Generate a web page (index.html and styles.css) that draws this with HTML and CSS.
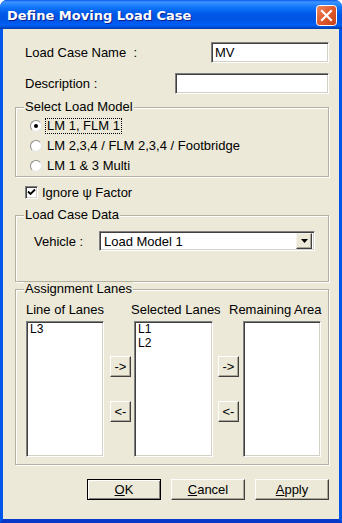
FILE: index.html
```html
<!DOCTYPE html>
<html lang="en">
<head>
    <meta charset="UTF-8">
    <meta name="viewport" content="width=device-width, initial-scale=1.0">
    <title>Define Moving Load Case</title>
    <link rel="stylesheet" href="styles.css">
</head>
<body>
    <div class="window">
        <div class="titlebar">
            <span class="title">Define Moving Load Case</span>
            <span class="close">
                <svg width="21" height="21" viewBox="0 0 21 21">
                    <defs>
                        <linearGradient id="cg" x1="0" y1="0" x2="1" y2="1">
                            <stop offset="0" stop-color="#F08A62"/>
                            <stop offset="0.5" stop-color="#E05A2C"/>
                            <stop offset="1" stop-color="#C6401A"/>
                        </linearGradient>
                    </defs>
                    <rect x="0.5" y="0.5" width="20" height="20" rx="3" fill="url(#cg)" stroke="#fff"/>
                    <path d="M6 6 L15 15 M15 6 L6 15" stroke="#fff" stroke-width="2.2" stroke-linecap="square"/>
                </svg>
            </span>
        </div>

        <div class="client">
            <div class="field-row name-row">
                <span class="label">Load Case Name&nbsp; :</span>
                <div class="edit edit-name">MV</div>
            </div>
            <div class="field-row desc-row">
                <span class="label">Description :</span>
                <div class="edit edit-desc"></div>
            </div>

            <fieldset class="group model-group">
                <legend>Select Load Model</legend>
                <div class="radios">
                    <div class="radio-row"><span class="radio checked"></span><span class="opt focus">LM 1, FLM 1</span></div>
                    <div class="radio-row"><span class="radio"></span><span class="opt">LM 2,3,4 / FLM 2,3,4 / Footbridge</span></div>
                    <div class="radio-row"><span class="radio"></span><span class="opt">LM 1 &amp; 3 Multi</span></div>
                </div>
            </fieldset>

            <div class="check-row">
                <span class="checkbox">
                    <svg width="9" height="9" viewBox="0 0 9 9">
                        <path d="M1 3.5 L3.5 6 L8 1.5" fill="none" stroke="#000" stroke-width="1.8"/>
                    </svg>
                </span>
                <span>Ignore &psi; Factor</span>
            </div>

            <fieldset class="group data-group">
                <legend>Load Case Data</legend>
                <div class="vehicle-row">
                    <span class="vehicle-label">Vehicle :</span>
                    <div class="combo">
                        <span class="combo-text">Load Model 1</span>
                        <span class="drop">
                            <svg width="7" height="4" viewBox="0 0 7 4"><path d="M0 0 H7 L3.5 4 Z" fill="#000"/></svg>
                        </span>
                    </div>
                </div>
            </fieldset>

            <fieldset class="group lanes-group">
                <legend>Assignment Lanes</legend>
                <div class="lane-heads">
                    <span>Line of Lanes</span>
                    <span>Selected Lanes</span>
                    <span>Remaining Area</span>
                </div>
                <div class="lane-lists">
                    <div class="listbox list-line">
                        <div>L3</div>
                    </div>
                    <div class="move-btns">
                        <button class="btn small">-&gt;</button>
                        <button class="btn small">&lt;-</button>
                    </div>
                    <div class="listbox list-selected">
                        <div>L1</div>
                        <div>L2</div>
                    </div>
                    <div class="move-btns second">
                        <button class="btn small">-&gt;</button>
                        <button class="btn small">&lt;-</button>
                    </div>
                    <div class="listbox list-remain"></div>
                </div>
            </fieldset>

            <div class="buttons">
                <button class="btn big default"><u>O</u>K</button>
                <button class="btn big"><u>C</u>ancel</button>
                <button class="btn big"><u>A</u>pply</button>
            </div>
        </div>
    </div>
</body>
</html>
```

FILE: styles.css
```css
body {
    margin: 0;
    font-family: "Liberation Sans", Arial, sans-serif;
    font-size: 13px;
    color: #000;
}

.window {
    width: 342px;
    height: 523px;
    display: flex;
    flex-direction: column;
    background: #0054E3;
    border-radius: 7px 7px 0 0;
    overflow: hidden;
}

/* title bar */
.titlebar {
    height: 29px;
    flex: none;
    display: flex;
    align-items: center;
    justify-content: space-between;
    padding: 1px 5px 0 7px;
    box-sizing: border-box;
    background: linear-gradient(#0A5AE6 0, #3D95FF 2px, #2A88FF 4px, #0E72F8 8px, #0058E8 14px, #0054E3 19px, #005AEF 23px, #0060F6 25px, #0050D6 27px, #003DA8 29px);
}
.title {
    font-family: "DejaVu Sans", sans-serif;
    font-weight: bold;
    font-size: 13px;
    color: #fff;
    text-shadow: 1px 1px 0 #0A1E8C;
}
.close { display: flex; }

/* client area */
.client {
    flex: 1;
    background: #ECE9D8;
    border-style: solid;
    border-width: 0 3px 4px 3px;
    border-color: #0055EA #0055EA #0838C8 #0055EA;
    padding: 13px 10px 0 12px;
}

.field-row {
    display: flex;
    align-items: center;
    justify-content: space-between;
    height: 21px;
    padding-left: 10px;
}
.name-row { margin-bottom: 10px; }
.desc-row { margin-bottom: 6px; }

.edit {
    box-sizing: border-box;
    height: 21px;
    background: #fff;
    border: 1px solid;
    border-color: #808080 #fff #fff #808080;
    box-shadow: inset 1px 1px 0 #404040, inset -1px -1px 0 #D4D0C8;
    padding: 2px 3px;
    line-height: 15px;
}
.edit-name { width: 118px; }
.edit-desc { width: 154px; }

/* group boxes */
.group {
    margin: 0;
    padding: 0;
    min-width: 0;
    border: 1px solid #B4B1A3;
    box-shadow: inset 1px 1px 0 #fff, 1px 1px 0 #fff;
}
.group legend {
    margin-left: 8px;
    padding: 0 1px;
    line-height: 14px;
    background: #ECE9D8;
}

.radios { padding-top: 2px; }
.radio-row {
    display: flex;
    align-items: center;
    height: 20px;
    padding-left: 14px;
}
.radio {
    box-sizing: border-box;
    width: 12px;
    height: 12px;
    border-radius: 50%;
    background: #fff;
    border: 1px solid;
    border-color: #8C8C8C #E4E4E4 #E4E4E4 #8C8C8C;
    margin-right: 4px;
    display: flex;
    align-items: center;
    justify-content: center;
}
.radio.checked::after {
    content: "";
    width: 4px;
    height: 4px;
    border-radius: 50%;
    background: #000;
}
.opt {
    padding: 0 1px;
    line-height: 14px;
}
.focus { outline: 1px dotted #000; }

.check-row {
    display: flex;
    align-items: center;
    height: 20px;
    margin: 5px 0 6px;
    padding-left: 10px;
}
.checkbox {
    box-sizing: border-box;
    width: 13px;
    height: 13px;
    background: #fff;
    border: 1px solid;
    border-color: #808080 #fff #fff #808080;
    box-shadow: inset 1px 1px 0 #404040, inset -1px -1px 0 #D4D0C8;
    margin-right: 4px;
    display: flex;
    align-items: center;
    justify-content: center;
}

/* load case data */
.vehicle-row {
    display: flex;
    align-items: center;
    margin: 9px 0 30px;
    padding-left: 18px;
}
.vehicle-label { width: 65px; }
.combo {
    box-sizing: border-box;
    width: 216px;
    height: 20px;
    display: flex;
    align-items: center;
    justify-content: space-between;
    background: #fff;
    border: 1px solid;
    border-color: #808080 #fff #fff #808080;
    box-shadow: inset 1px 1px 0 #404040, inset -1px -1px 0 #D4D0C8;
    padding: 2px;
}
.combo-text { padding-left: 2px; }
.drop {
    box-sizing: border-box;
    width: 16px;
    height: 16px;
    background: #ECE9D8;
    border: 1px solid;
    border-color: #F4F3EE #404040 #404040 #F4F3EE;
    box-shadow: inset -1px -1px 0 #ACA899;
    display: flex;
    align-items: center;
    justify-content: center;
}

/* assignment lanes */
.lane-heads {
    display: grid;
    grid-template-columns: 105px 98px auto;
    padding-left: 10px;
    margin-top: 7px;
    line-height: 14px;
}
.lane-lists {
    display: flex;
    margin: 4px 0 7px;
    padding-left: 10px;
}
.listbox {
    box-sizing: border-box;
    width: 78px;
    height: 136px;
    background: #fff;
    border: 1px solid;
    border-color: #808080 #fff #fff #808080;
    box-shadow: inset 1px 1px 0 #404040, inset -1px -1px 0 #D4D0C8;
    padding: 0 3px;
    font-size: 12px;
    line-height: 14px;
}
.list-selected { width: 79px; }
.move-btns {
    display: flex;
    flex-direction: column;
    gap: 24px;
    padding-top: 35px;
    margin: 0 3px 0 6px;
}
.move-btns.second { margin: 0 4px 0 5px; }

/* buttons */
.btn {
    box-sizing: border-box;
    font-family: "Liberation Sans", Arial, sans-serif;
    font-size: 13px;
    color: #000;
    background: #ECE9D8;
    border: 1px solid;
    border-color: #fff #404040 #404040 #fff;
    box-shadow: inset -1px -1px 0 #ACA899;
    padding: 0;
    line-height: 17px;
}
.btn.small { width: 21px; height: 21px; }
.btn.big { width: 74px; height: 21px; }
.btn.default {
    border-color: #000;
    box-shadow: inset 1px 1px 0 #fff, inset -1px -1px 0 #808080;
}
.buttons {
    display: flex;
    justify-content: flex-end;
    gap: 10px;
    margin-top: 14px;
}
```
